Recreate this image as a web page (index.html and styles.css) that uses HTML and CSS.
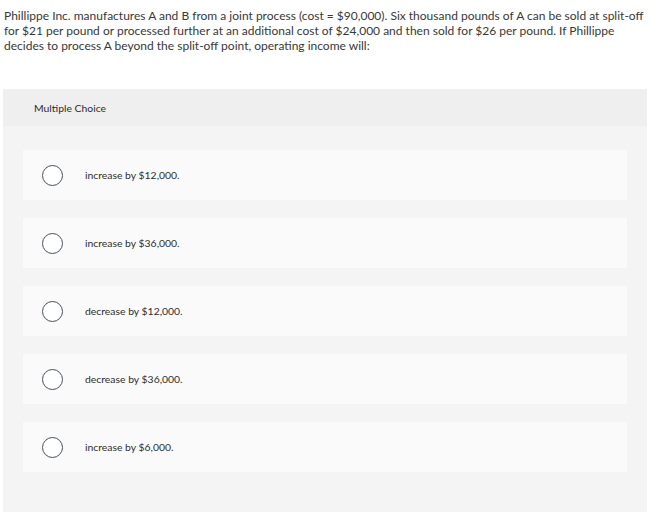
FILE: index.html
```html
<!DOCTYPE html>
<html>
<head>
<meta charset="utf-8">
<link rel="stylesheet" href="styles.css">
</head>
<body>
<p class="question">Phillippe Inc. manufactures A and B from a joint process (cost = $90,000). Six thousand pounds of A can be sold at split-off for $21 per pound or processed further at an additional cost of $24,000 and then sold for $26 per pound. If Phillippe decides to process A beyond the split-off point, operating income will:</p>
<section class="panel">
  <div class="panel-header">Multiple Choice</div>
  <div class="options">
    <div class="option"><span class="radio"></span><span class="label">increase by $12,000.</span></div>
    <div class="option"><span class="radio"></span><span class="label">increase by $36,000.</span></div>
    <div class="option"><span class="radio"></span><span class="label">decrease by $12,000.</span></div>
    <div class="option"><span class="radio"></span><span class="label">decrease by $36,000.</span></div>
    <div class="option"><span class="radio"></span><span class="label">increase by $6,000.</span></div>
  </div>
</section>
</body>
</html>
```

FILE: styles.css
```css
html, body {
  margin: 0;
  padding: 0;
  background: #ffffff;
}
body {
  font-family: Lato, "Open Sans", sans-serif;
  color: #333333;
}
.question {
  margin: 0;
  padding: 8px 4px 0 4px;
  width: 645px;
  font-size: 12px;
  line-height: 15px;
  color: #383838;
}
.panel {
  margin: 36px 0 0 3px;
  width: 644px;
  height: 423px;
  background: #f4f4f4;
  display: flex;
  flex-direction: column;
}
.panel-header {
  height: 37px;
  background: #efefef;
  display: flex;
  align-items: center;
  padding-left: 31px;
  font-size: 10.4px;
  color: #2d2d2d;
}
.options {
  padding: 24px 20px 0 20px;
  display: flex;
  flex-direction: column;
  gap: 18px;
}
.option {
  height: 50px;
  background: #fafafa;
  display: flex;
  align-items: center;
  padding-left: 19px;
}
.radio {
  width: 19px;
  height: 19px;
  border: 1.5px solid #44515e;
  border-radius: 50%;
  background: #fff;
  flex: none;
}
.label {
  margin-left: 22px;
  font-size: 10.4px;
  color: #2d2d2d;
}
```
